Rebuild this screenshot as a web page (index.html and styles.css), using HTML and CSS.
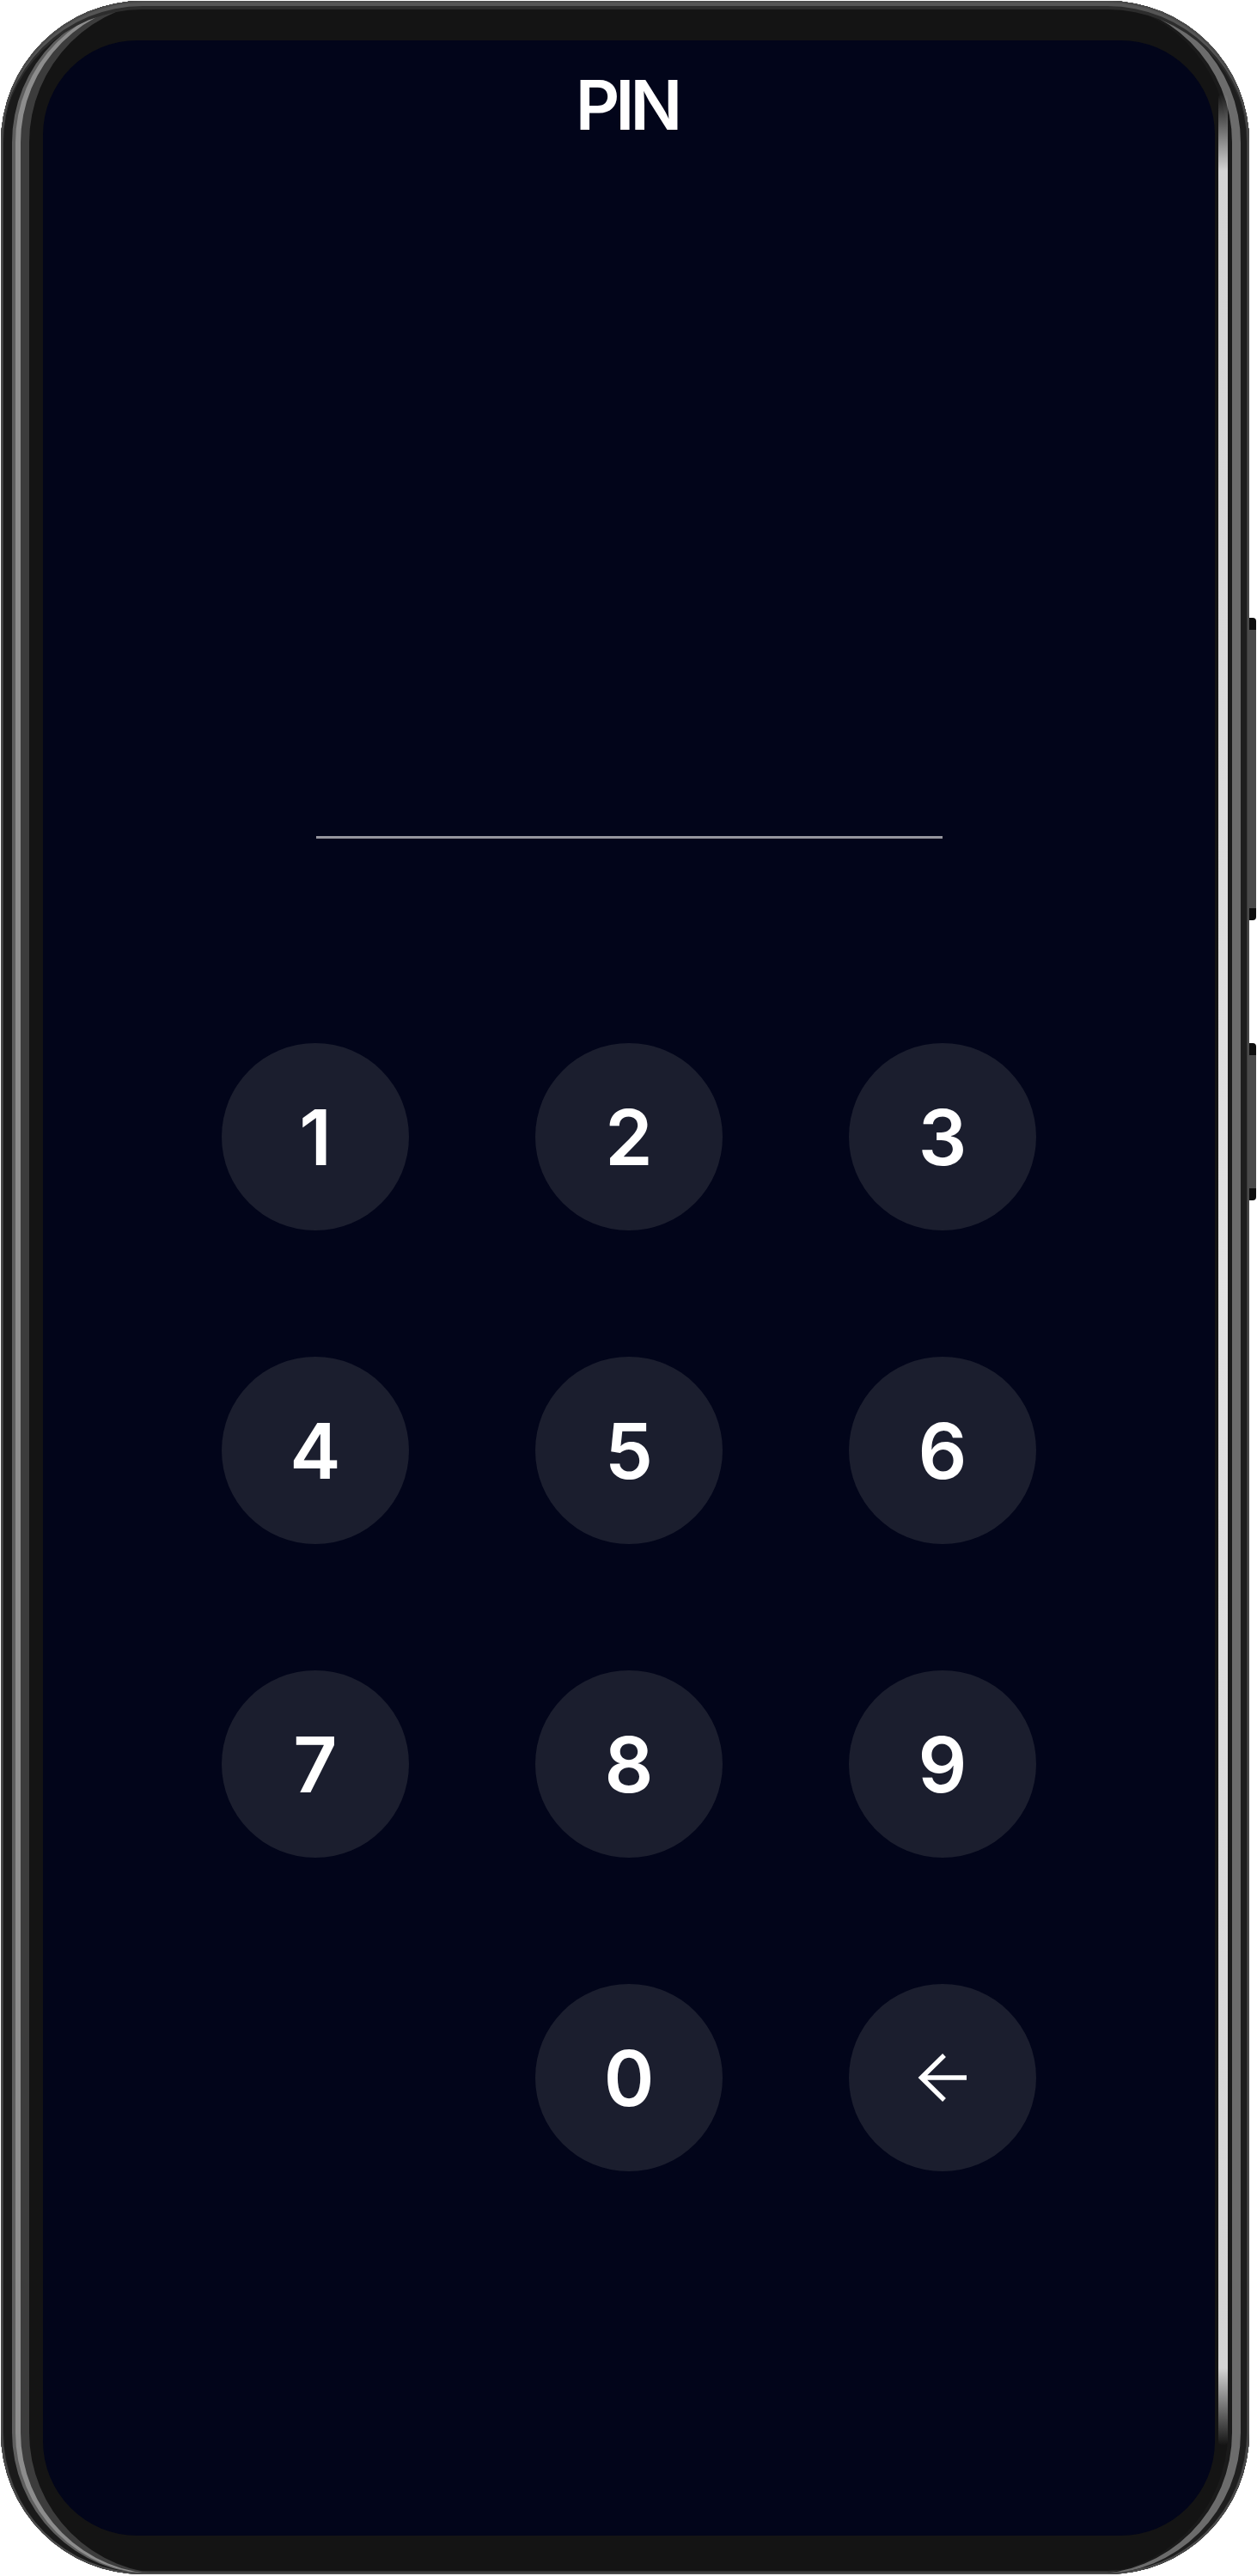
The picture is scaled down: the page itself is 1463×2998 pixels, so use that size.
FILE: index.html
```html
<!DOCTYPE html>
<html lang="en">
<head>
<meta charset="utf-8">
<title>PIN</title>
<link rel="stylesheet" href="styles.css">
</head>
<body>
<div class="phone">
  <div class="side-btn side-btn-vol"></div>
  <div class="side-btn side-btn-power"></div>
  <div class="glare"></div>
  <div class="screen">
    <h1 class="title">PIN</h1>
    <div class="pin-line"></div>
    <div class="keypad">
      <button class="key">1</button>
      <button class="key">2</button>
      <button class="key">3</button>
      <button class="key">4</button>
      <button class="key">5</button>
      <button class="key">6</button>
      <button class="key">7</button>
      <button class="key">8</button>
      <button class="key">9</button>
      <div class="key-empty"></div>
      <button class="key">0</button>
      <button class="key key-back" aria-label="Backspace">
        <svg class="back-icon" viewBox="0 0 58 58" width="58" height="58">
          <path d="M57 29H5M31 3L4.5 29L31 55" fill="none" stroke="#ffffff" stroke-width="5.5"/>
        </svg>
      </button>
    </div>
  </div>
</div>
</body>
</html>
```
FILE: styles.css
```css
html, body {
  margin: 0;
  padding: 0;
  background: #ffffff;
}
body {
  width: 1463px;
  height: 2998px;
  overflow: hidden;
}
.phone {
  position: relative;
  box-sizing: border-box;
  width: 1453px;
  height: 2995px;
  margin-top: 1px;
  margin-left: 1px;
  padding: 46px 40px 45px 49px;
  border-radius: 165px;
  background: #141414;
  box-shadow:
    inset 0 0 0 2px #4a4a4a,
    inset 0 6px 0 #555555,
    inset 0 10px 0 #2c2c2c,
    inset 3px 0 0 #3a3a3a,
    inset 13px 0 0 #1a1a1a,
    inset 17px 0 0 #5e5e5e,
    inset 23px 0 0 #8d8d8d,
    inset 33px 0 0 #3c3c3c,
    inset -3px 0 0 #3a3a3a,
    inset -10px 0 0 #1e1e1e,
    inset -20px 0 0 #6c6c6c,
    inset -25px 0 0 #1a1a1a,
    inset 0 -4px 0 #333333;
}
.glare {
  position: absolute;
  right: 25px;
  top: 108px;
  bottom: 150px;
  width: 11px;
  border-radius: 6px;
  background: linear-gradient(to bottom, rgba(217, 217, 217, 0) 0, #d4d4d4 90px, #e2e2e2 50%, #d4d4d4 calc(100% - 90px), rgba(217, 217, 217, 0) 100%);
}
.side-btn {
  position: absolute;
  right: -8px;
  width: 8px;
  border-radius: 0 4px 4px 0;
  background: linear-gradient(to bottom, #0e0e0e 0, #0e0e0e 14px, #4a4a4a 14px, #4a4a4a calc(100% - 14px), #0e0e0e calc(100% - 14px));
}
.side-btn-vol {
  top: 718px;
  height: 352px;
}
.side-btn-power {
  top: 1213px;
  height: 183px;
}
.screen {
  position: relative;
  box-sizing: border-box;
  width: 100%;
  height: 100%;
  border-radius: 110px;
  background: #02051a;
  display: flex;
  flex-direction: column;
  align-items: center;
  padding-top: 35px;
  font-family: "Inter", "Noto Sans", sans-serif;
  color: #ffffff;
}
.title {
  margin: 0;
  font-size: 80px;
  line-height: 1;
  font-weight: 600;
  letter-spacing: -5px;
  text-indent: -5px;
}
.pin-line {
  margin-top: 811px;
  width: 729px;
  height: 3px;
  background: #96969e;
}
.keypad {
  margin-top: 238px;
  display: grid;
  grid-template-columns: repeat(3, 218px);
  grid-auto-rows: 218px;
  gap: 147px;
}
.key {
  width: 218px;
  height: 218px;
  border: none;
  border-radius: 50%;
  background: #1b1e2e;
  color: #ffffff;
  font-family: "Inter", "Noto Sans", sans-serif;
  font-size: 89px;
  font-weight: 600;
  line-height: 1;
  padding: 0;
  display: flex;
  align-items: center;
  justify-content: center;
}
.key-empty {
  width: 218px;
  height: 218px;
}
.back-icon {
  display: block;
}
```
